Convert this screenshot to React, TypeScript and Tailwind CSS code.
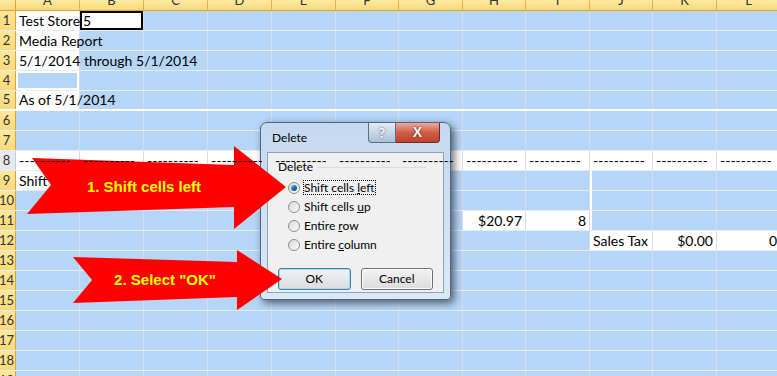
import React from 'react';

type Cell = {
  text?: string;
  white?: boolean;
  right?: boolean;
  clip?: boolean;
  extra?: string;
};

const COLS = ['A', 'B', 'C', 'D', 'E', 'F', 'G', 'H', 'I', 'J', 'K', 'L'];
const COL_W = [
  'w-[64px]', 'w-[64px]', 'w-[64px]', 'w-[64px]', 'w-[64px]', 'w-[63px]',
  'w-[64px]', 'w-[63px]', 'w-[64px]', 'w-[63px]', 'w-[64px]', 'w-[64px]',
];

const DASH = '----------';

// builds a row of blue (selected) cells with a few overrides
function row(overrides: Record<number, Cell> = {}): Cell[] {
  return COLS.map((_, i) => overrides[i] ?? {});
}

const ROWS: { cells: Cell[]; gray?: boolean; thick?: boolean }[] = [
  { cells: row({ 0: { text: 'Test Store', white: true }, 1: { text: '5', white: true, extra: 'shadow-[inset_0_0_0_2px_#000]' } }) },
  { cells: row({ 0: { text: 'Media Report', white: true } }) },
  { cells: row({ 0: { text: '5/1/2014 through 5/1/2014', white: true } }) },
  { cells: row({ 0: { extra: 'shadow-[inset_0_0_0_2px_#fff]' } }) },
  { cells: row({ 0: { text: 'As of 5/1/2014', white: true } }), thick: true },
  { cells: row() },
  { cells: row() },
  { cells: COLS.map(() => ({ text: DASH, white: true, clip: true })), gray: true },
  { cells: row({ 0: { text: 'Shift', white: true }, 9: { extra: 'shadow-[inset_2px_0_0_#fff]' } }) },
  { cells: row({ 9: { extra: 'shadow-[inset_2px_0_0_#fff]' } }) },
  {
    cells: row({
      7: { text: '$20.97', white: true, right: true },
      8: { text: '8', white: true, right: true },
      9: { extra: 'shadow-[inset_2px_0_0_#fff]' },
    }),
  },
  {
    cells: row({
      9: { text: 'Sales Tax', white: true },
      10: { text: '$0.00', white: true, right: true },
      11: { text: '0', white: true, right: true },
    }),
  },
  { cells: row() },
  { cells: row() },
  { cells: row() },
  { cells: row() },
  { cells: row() },
  { cells: row() },
  { cells: row() },
];

function Radio({ checked }: { checked?: boolean }) {
  return (
    <span className="flex h-[12px] w-[12px] items-center justify-center rounded-full border border-[#8e8f8f] bg-gradient-to-br from-[#d9dadb] to-[#fbfbfb]">
      {checked && (
        <span className="h-[6px] w-[6px] rounded-full bg-gradient-to-br from-[#7fc0ea] via-[#1c73b4] to-[#0d3d6e]" />
      )}
    </span>
  );
}

function Dialog() {
  return (
    <div className="absolute left-[260px] top-[122px] flex h-[178px] w-[191px] flex-col rounded-t-[7px] rounded-b-[4px] border border-[#4e6682] bg-gradient-to-b from-[#c4d9f0] to-[#dbe8f6] font-['Lato',sans-serif] text-[12px] text-black shadow-[3px_3px_8px_rgba(0,0,0,0.6)]">
      <div className="flex h-[29px] items-start justify-between">
        <span className="ml-[11px] mt-[8px] leading-[14px]">Delete</span>
        <div className="mr-[10px] flex">
          <div className="flex h-[20px] w-[28px] items-center justify-center rounded-bl-[4px] border border-t-0 border-[#5a6f88] bg-gradient-to-b from-[#e3ebf5] via-[#c7d5e6] to-[#aebfd5] text-[14px] font-bold text-white [text-shadow:0_0_2px_#2b3a4d]">
            ?
          </div>
          <div className="flex h-[20px] w-[44px] items-center justify-center rounded-br-[4px] border border-l-0 border-t-0 border-[#6a2a20] bg-gradient-to-b from-[#e7ab9c] via-[#cf5d48] to-[#c0412b] font-['Liberation_Sans',sans-serif] text-[14px] font-bold text-white [text-shadow:0_0_2px_#4a1208]">
            X
          </div>
        </div>
      </div>
      <div className="mx-[6px] flex h-[141px] flex-col border border-[#8fa3ba] bg-[#f0f0f0] px-[10px] pt-[7px]">
        <div className="flex items-center gap-[4px] pr-[7px]">
          <span className="leading-[14px]">Delete</span>
          <span className="h-px flex-1 bg-[#d5dfe5]" />
        </div>
        <div className="mt-[4px] flex flex-col pl-[10px]">
          <label className="flex h-[19px] items-center gap-[3px]">
            <Radio checked />
            <span className="border border-dotted border-black leading-[13px]">
              Shift cells <span className="underline">l</span>eft
            </span>
          </label>
          <label className="flex h-[19px] items-center gap-[3px]">
            <Radio />
            <span className="px-px leading-[13px]">
              Shift cells <span className="underline">u</span>p
            </span>
          </label>
          <label className="flex h-[19px] items-center gap-[3px]">
            <Radio />
            <span className="px-px leading-[13px]">
              Entire <span className="underline">r</span>ow
            </span>
          </label>
          <label className="flex h-[19px] items-center gap-[3px]">
            <Radio />
            <span className="px-px leading-[13px]">
              Entire <span className="underline">c</span>olumn
            </span>
          </label>
        </div>
        <div className="mt-[14px] flex gap-[10px]">
          <button className="flex h-[22px] w-[74px] items-center justify-center rounded-[3px] border border-[#3c7fb1] bg-gradient-to-b from-[#f2f2f2] to-[#d8dde2] shadow-[inset_0_0_0_1px_#a7d8f5]">
            OK
          </button>
          <button className="flex h-[22px] w-[74px] items-center justify-center rounded-[3px] border border-[#707070] bg-gradient-to-b from-[#f2f2f2] to-[#dcdcdc] shadow-[inset_0_0_0_1px_#fbfbfb]">
            Cancel
          </button>
        </div>
      </div>
    </div>
  );
}

function Arrows() {
  return (
    <svg className="pointer-events-none absolute left-0 top-0" width={777} height={376} viewBox="0 0 777 376">
      <polygon points="32,158 234,165 234,146 286,187 234,229 234,207 27,214 51,185" fill="#ff0000" />
      <text x={144} y={192} textAnchor="middle" fill="#ffff00" fontFamily="Liberation Sans, Arial, sans-serif" fontWeight="bold" fontSize={15}>
        1. Shift cells left
      </text>
      <polygon points="73,257 237,262 237,250 282,279 237,310 237,297 73,303 92,280" fill="#ff0000" />
      <text x={165} y={285} textAnchor="middle" fill="#ffff00" fontFamily="Liberation Sans, Arial, sans-serif" fontWeight="bold" fontSize={15}>
        2. Select "OK"
      </text>
    </svg>
  );
}

export default function App() {
  return (
    <div className="relative h-[376px] w-[777px] overflow-hidden bg-white font-['Lato',sans-serif] text-[14px] text-black">
      {/* column headers */}
      <div className="flex h-[11px] border-b border-[#e0a236] bg-gradient-to-b from-[#fdeaa0] to-[#f8d978]">
        <div className="w-[16px] shrink-0 border-r border-[#e0a236]" />
        {COLS.map((c, i) => (
          <div
            key={c}
            className={`${COL_W[i]} flex shrink-0 justify-center overflow-hidden border-r border-[#e8b04a] text-[13px] leading-[13px] text-[#333]`}
          >
            <span className="-mt-[6px]">{c}</span>
          </div>
        ))}
      </div>

      {/* sheet rows */}
      {ROWS.map((r, ri) => (
        <div
          key={ri}
          className={`flex h-[20px] ${r.thick ? 'border-b-2 border-white' : 'border-b border-[#e6edf5]'}`}
        >
          <div
            className={`flex w-[16px] shrink-0 items-center justify-center border-r pr-[2px] text-[13px] text-[#333] ${
              r.gray ? 'border-[#c7ccd3] bg-[#e6e9ee]' : 'border-[#e0a236] bg-gradient-to-b from-[#fde796] to-[#f9d97c]'
            }`}
          >
            {ri + 1}
          </div>
          {r.cells.map((cell, ci) => (
            <div
              key={ci}
              className={`${COL_W[ci]} flex shrink-0 items-center border-r ${
                cell.white ? 'border-[#d9dde2] bg-white' : 'border-[#d6dde6] bg-[#b6d6f8]'
              } ${cell.right ? 'justify-end pr-[3px]' : 'pl-[3px]'} ${cell.extra ?? ''}`}
            >
              {cell.text && (
                <span
                  className={`relative z-10 whitespace-nowrap leading-[18px] ${
                    cell.clip ? 'max-w-[51px] overflow-hidden' : ''
                  }`}
                >
                  {cell.text}
                </span>
              )}
            </div>
          ))}
        </div>
      ))}

      <Dialog />
      <Arrows />
    </div>
  );
}
